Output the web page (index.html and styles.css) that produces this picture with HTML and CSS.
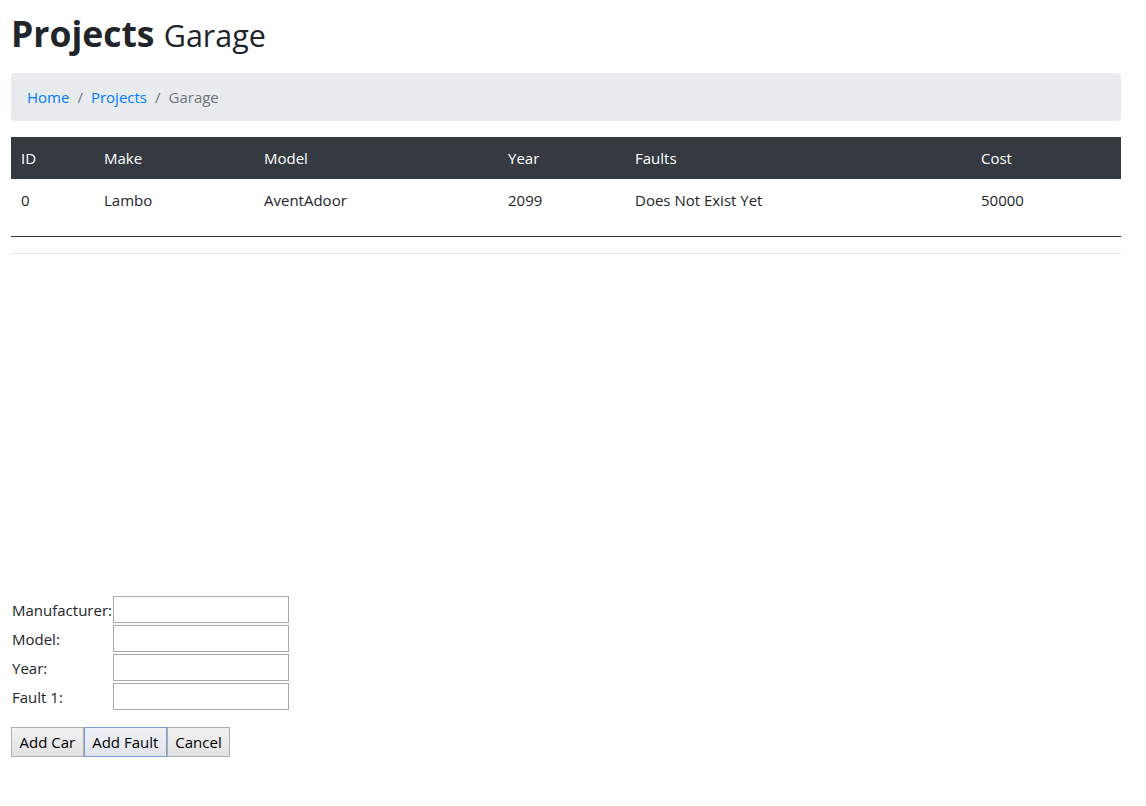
FILE: index.html
```html
<!DOCTYPE html>
<html lang="en">
<head>
<meta charset="utf-8">
<title>Projects - Garage</title>
<link rel="stylesheet" href="styles.css">
</head>
<body>
<div class="page">
  <h1 class="title">Projects <small>Garage</small></h1>
  <nav class="crumbs">
    <a href="#" class="crumb">Home</a>
    <span class="sep">/</span>
    <a href="#" class="crumb">Projects</a>
    <span class="sep">/</span>
    <span class="crumb active">Garage</span>
  </nav>
  <table class="cars">
    <thead>
      <tr>
        <th class="c-id">ID</th>
        <th class="c-make">Make</th>
        <th class="c-model">Model</th>
        <th class="c-year">Year</th>
        <th class="c-faults">Faults</th>
        <th class="c-cost">Cost</th>
      </tr>
    </thead>
    <tbody>
      <tr>
        <td>0</td>
        <td>Lambo</td>
        <td>AventAdoor</td>
        <td>2099</td>
        <td>Does Not Exist Yet</td>
        <td>50000</td>
      </tr>
    </tbody>
  </table>
  <hr class="rule">
  <div class="spacer"></div>
  <form class="car-form">
    <table class="fields">
      <tr><td class="lbl"><label for="m">Manufacturer:</label></td><td><input id="m" type="text"></td></tr>
      <tr><td class="lbl"><label for="mo">Model:</label></td><td><input id="mo" type="text"></td></tr>
      <tr><td class="lbl"><label for="y">Year:</label></td><td><input id="y" type="text"></td></tr>
      <tr><td class="lbl"><label for="f">Fault 1:</label></td><td><input id="f" type="text"></td></tr>
    </table>
    <div class="buttons"><button type="button" class="btn">Add Car</button><button type="button" class="btn focused">Add Fault</button><button type="button" class="btn">Cancel</button></div>
  </form>
</div>
</body>
</html>
```
FILE: styles.css
```css
* { box-sizing: border-box; }
html, body { margin: 0; padding: 0; background: #fff; }
body {
  font-family: "Open Sans", "Noto Sans", sans-serif;
  font-size: 15px;
  line-height: 24px;
  color: #212529;
}
.page {
  padding: 11px 25px 0 11px;
}
.title {
  margin: 0 0 15px;
  font-size: 35.5px;
  line-height: 45px;
  font-weight: 700;
  color: #212529;
}
.title small {
  font-size: 30.5px;
  font-weight: 400;
}
.crumbs {
  display: flex;
  align-items: center;
  background: #e9ecef;
  border-radius: 4px;
  padding: 12px 16px;
  margin-bottom: 16px;
  height: 48px;
}
.crumb { color: #007bff; text-decoration: none; }
.crumb.active { color: #6c757d; }
.sep { color: #6c757d; padding: 0 8px; }
.cars {
  width: 100%;
  table-layout: fixed;
  border-collapse: collapse;
  border-bottom: 1px solid #343a40;
}
.cars th, .cars td {
  text-align: left;
  padding: 9px 10px;
  font-weight: 400;
  vertical-align: top;
}
.cars thead th { background: #343a40; color: #fff; }
.cars tbody td { padding-bottom: 24px; }
.c-id { width: 83px; }
.c-make { width: 160px; }
.c-model { width: 244px; }
.c-year { width: 127px; }
.c-faults { width: 346px; }
.c-cost { width: 150px; }
.rule {
  border: 0;
  border-top: 1px solid rgba(0,0,0,.1);
  margin: 16px 0;
}
.spacer { height: 324px; }
.car-form { margin: 0; }
.fields { border-collapse: separate; border-spacing: 0 2px; }
.fields td { padding: 0; vertical-align: middle; }
.fields .lbl { width: 102px; padding-left: 1px; }
.fields input {
  display: block;
  width: 176px;
  height: 27px;
  border: 1px solid #a9a9a9;
  padding: 1px 2px;
  font: inherit;
  margin: 0;
}
.buttons { margin-top: 15px; display: flex; }
.btn {
  font: inherit;
  color: #000;
  height: 30px;
  line-height: 24px;
  padding: 2px 7.5px;
  margin: 0;
  border: 1px solid #adadad;
  background: linear-gradient(#f1f1f1, #e2e2e2);
  border-radius: 0;
}
.btn.focused {
  border-color: #7a9fdc;
  background: linear-gradient(#eef1f5, #e1e4ea);
}
```
